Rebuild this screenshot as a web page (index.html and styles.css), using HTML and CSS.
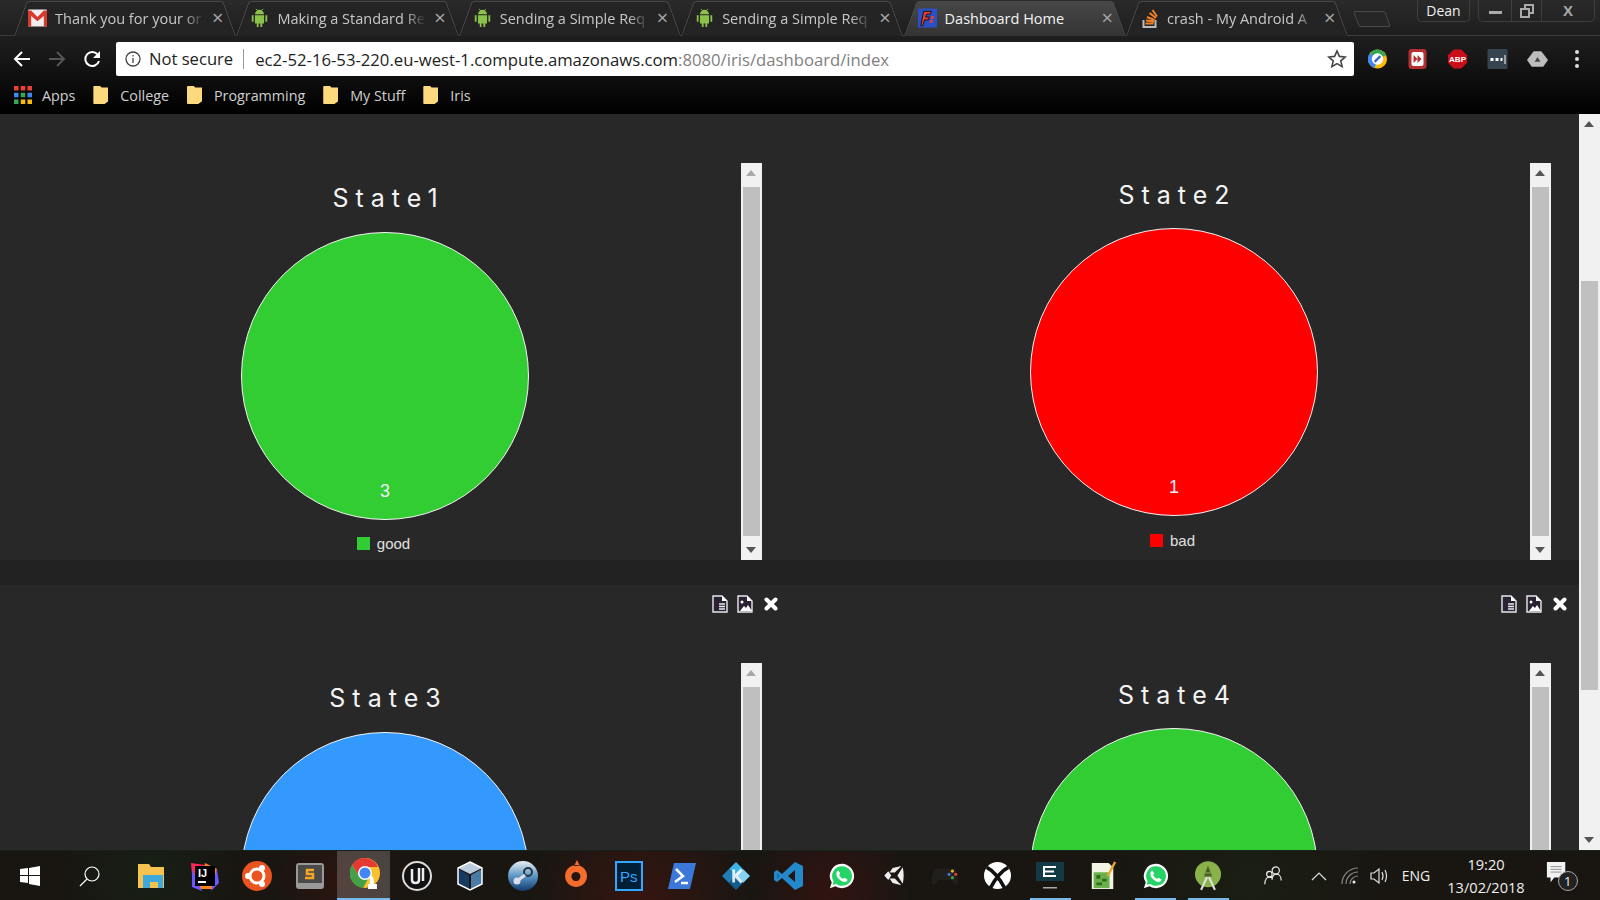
FILE: index.html
```html
<!DOCTYPE html>
<html lang="en">
<head>
    <meta charset="UTF-8">
    <title>Dashboard Home</title>
    <link rel="stylesheet" href="styles.css">
</head>
<body>
    <svg class="defs" width="0" height="0">
        <symbol id="android" viewBox="0 0 20 22">
            <path fill="#8bc34a" d="M5 7a5 5 0 0 1 10 0zM5 8h10v9h-2v4h-2v-4H9v4H7v-4H5zM1.500 8h2v7h-2zM16.500 8h2v7h-2z"/>
            <path stroke="#8bc34a" d="M6 1l2 2M14 1l-2 2"/>
        </symbol>
        <symbol id="doc" viewBox="0 0 16 18">
            <path fill="#2a2233" stroke="#e8e8f0" stroke-width="1.400" d="M1 1h9l5 5v11H1z"/>
            <path fill="#fff" d="M10 1l5 5h-5z"/>
            <path stroke="#e8e8f0" stroke-width="1.500" d="M7 9h6M7 11.500h6M7 14h6"/>
        </symbol>
        <symbol id="docimg" viewBox="0 0 16 18">
            <path fill="#2a2233" stroke="#e8e8f0" stroke-width="1.400" d="M1 1h9l5 5v11H1z"/>
            <path fill="#fff" d="M10 1l5 5h-5zM3 16l4-5 2 2 2-3 4 6z"/>
            <circle cx="5" cy="7" r="1.500" fill="#fff"/>
        </symbol>
        <symbol id="cross" viewBox="0 0 14 14">
            <path stroke="#fff" stroke-width="4" stroke-linecap="round" d="M2.500 2.500l9 9M11.500 2.500l-9 9"/>
        </symbol>
        <symbol id="whatsapp" viewBox="0 0 30 30">
            <path fill="#fff" d="M15 2a13 13 0 0 0-11 20l-2 6 6-2A13 13 0 1 0 15 2z"/>
            <path fill="#25d366" d="M15 4.500a10.500 10.500 0 0 0-9 16l-1 4 4-1a10.500 10.500 0 1 0 6-19z"/>
            <path fill="#fff" d="M11 9l2 3-1 2c1 2 2 3 4 4l2-1 3 2c-1 3-4 3-7 1-3-2-5-4-5-7 0-2 1-4 2-4z"/>
        </symbol>
    </svg>

    <header class="chrome">
        <div class="tabstrip">
            <div class="tab">
                <svg class="favicon" viewBox="0 0 18 16"><rect width="18" height="16" rx="1" fill="#eee"/><path fill="#d9392e" d="M0 1h3l6 6 6-6h3v15h-3V6l-6 5-6-5v10H0z"/></svg>
                <span class="tab-title">Thank you for your or</span>
                <span class="tab-x">×</span>
            </div>
            <div class="tab">
                <svg class="favicon"><use href="#android"/></svg>
                <span class="tab-title">Making a Standard Re</span>
                <span class="tab-x">×</span>
            </div>
            <div class="tab">
                <svg class="favicon"><use href="#android"/></svg>
                <span class="tab-title">Sending a Simple Req</span>
                <span class="tab-x">×</span>
            </div>
            <div class="tab">
                <svg class="favicon"><use href="#android"/></svg>
                <span class="tab-title">Sending a Simple Req</span>
                <span class="tab-x">×</span>
            </div>
            <div class="tab active">
                <svg class="favicon" viewBox="0 0 20 20"><rect width="20" height="20" fill="#2a50c8"/><path fill="#e8402a" stroke="#111" d="M6 3h8l-1 3H9L8 9h4l-1 3H7l-2 6H3z"/><path fill="#e8402a" d="M14 8h3l-1 3h-3zM13 12h3l-1 3h-3z"/></svg>
                <span class="tab-title full">Dashboard Home</span>
                <span class="tab-x">×</span>
            </div>
            <div class="tab">
                <svg class="favicon" viewBox="0 0 18 20"><path fill="#bcbbbb" d="M2 12h2v6h10v-6h2v8H2z"/><path stroke="#f48024" stroke-width="2" d="M5 15.500h8M5.500 12.500l8 1M6.500 9l7.500 3M9 5l6.500 5M12 2l4.500 6.500"/></svg>
                <span class="tab-title">crash - My Android A</span>
                <span class="tab-x">×</span>
            </div>
            <div class="newtab"></div>
            <div class="wincontrols">
                <div class="profile">Dean</div>
                <div class="winbtns">
                    <span class="winbtn min"><svg width="13" height="3"><rect width="13" height="3" fill="#aaa"/></svg></span>
                    <span class="winbtn rest"><svg width="14" height="14" fill="none" stroke="#aaa" stroke-width="2"><rect x="1" y="5" width="8" height="8"/><path d="M5 5V1h8v8H9"/></svg></span>
                    <span class="winbtn close">X</span>
                </div>
            </div>
        </div>

        <div class="toolbar">
            <svg class="nav" viewBox="0 0 18 18" fill="none" stroke="#fff" stroke-width="2"><path d="M17 9H2M9 2L2 9l7 7"/></svg>
            <svg class="nav" viewBox="0 0 18 18" fill="none" stroke="#555" stroke-width="2"><path d="M1 9h15M9 2l7 7-7 7"/></svg>
            <svg class="nav" viewBox="0 0 18 18" fill="none" stroke="#fff" stroke-width="2"><path d="M15 5a7 7 0 1 0 1 6"/><path fill="#fff" stroke="none" d="M17 1v7h-7z"/></svg>
            <div class="omnibox">
                <svg class="info" viewBox="0 0 16 16" fill="none" stroke="#444" stroke-width="1.300"><circle cx="8" cy="8" r="7"/><path d="M8 7v5M8 4v1.600"/></svg>
                <span class="secure">Not secure</span>
                <span class="url">ec2-52-16-53-220.eu-west-1.compute.amazonaws.com<span class="url-rest">:8080/iris/dashboard/index</span></span>
                <svg class="star" viewBox="0 0 20 20" fill="none" stroke="#444" stroke-width="1.600"><path d="M10 2l2.400 5.400 5.800.6-4.400 3.900 1.300 5.700L10 14.600l-5.100 3 1.300-5.700L1.800 8l5.800-.6z"/></svg>
            </div>
            <div class="extensions">
                <svg class="ext" viewBox="0 0 22 22"><circle cx="11" cy="11" r="10" fill="#fbbc05"/><path fill="#34a853" d="M3 5a10 10 0 0 1 17 2l-9 4z"/><path fill="#4285f4" d="M3 5a10 10 0 0 0 5 15.500L11 11z"/><circle cx="11" cy="11" r="6" fill="#fff"/><path stroke="#3367c4" stroke-width="2.400" d="M8 14l6-6"/></svg>
                <svg class="ext" viewBox="0 0 20 22"><rect x="1" y="1" width="18" height="20" rx="3" fill="#b52e31"/><rect x="4" y="4" width="12" height="14" rx="2" fill="#fff"/><path fill="#b52e31" d="M6 7l4 4-4 4zM10 7l4 4-4 4z"/></svg>
                <svg class="ext" viewBox="0 0 22 22"><path fill="#c9101a" d="M7 1h8l6 6v8l-6 6H7l-6-6V7z"/><text x="11" y="14" class="abp">ABP</text></svg>
                <svg class="ext" viewBox="0 0 20 22"><rect y="1" width="20" height="20" rx="1" fill="#36444f"/><path fill="#fff" d="M3 10h3v3H3zM8 10h3v3H8zM13 10h2v3h-2zM17 7h1v9h-1z"/></svg>
                <svg class="ext" viewBox="0 0 22 20"><path fill="#bdbdbd" d="M7 2h8l7 9-5 7H5l-5-7z"/><path fill="#444" d="M11 8l3 5H8z"/></svg>
            </div>
            <div class="kebab"><i></i><i></i><i></i></div>
        </div>

        <div class="bookmarks">
            <div class="bookmark">
                <svg class="apps" viewBox="0 0 16 16"><path fill="#ea4335" d="M0 0h4v4H0zM6 0h4v4H6zM12 0h4v4h-4z"/><path fill="#4285f4" d="M0 6h4v4H0zM12 6h4v4h-4z"/><path fill="#34a853" d="M6 6h4v4H6zM0 12h4v4H0z"/><path fill="#fbbc05" d="M6 12h4v4H6zM12 12h4v4h-4z"/></svg>
                Apps
            </div>
            <div class="bookmark"><span class="folder"></span>College</div>
            <div class="bookmark"><span class="folder"></span>Programming</div>
            <div class="bookmark"><span class="folder"></span>My Stuff</div>
            <div class="bookmark"><span class="folder"></span>Iris</div>
        </div>
    </header>

    <main class="page">
        <div class="dashboard">
            <div class="row first">
                <section class="panel">
                    <h2 class="chart-title">State1</h2>
                    <div class="pie good"><span class="pie-value">3</span></div>
                    <div class="legend"><span class="swatch good"></span>good</div>
                    <div class="vscroll idle"></div>
                </section>
                <section class="panel raised">
                    <h2 class="chart-title">State2</h2>
                    <div class="pie bad"><span class="pie-value">1</span></div>
                    <div class="legend"><span class="swatch bad"></span>bad</div>
                    <div class="vscroll"></div>
                </section>
            </div>
            <div class="band"></div>
            <div class="row-tools">
                <div class="tools">
                    <svg class="tool"><use href="#doc"/></svg>
                    <svg class="tool"><use href="#docimg"/></svg>
                    <svg class="tool cross"><use href="#cross"/></svg>
                </div>
                <div class="tools">
                    <svg class="tool"><use href="#doc"/></svg>
                    <svg class="tool"><use href="#docimg"/></svg>
                    <svg class="tool cross"><use href="#cross"/></svg>
                </div>
            </div>
            <div class="row">
                <section class="panel">
                    <h2 class="chart-title">State3</h2>
                    <div class="pie info-blue"></div>
                    <div class="vscroll idle"></div>
                </section>
                <section class="panel raised">
                    <h2 class="chart-title">State4</h2>
                    <div class="pie good"></div>
                    <div class="vscroll"></div>
                </section>
            </div>
        </div>
        <aside class="page-scroll">
            <span class="arrow up"></span>
            <div class="page-thumb"></div>
            <span class="arrow down"></span>
        </aside>
    </main>

    <footer class="taskbar">
        <div class="task start"><svg width="20" height="20" viewBox="0 0 20 20"><path fill="#fff" d="M0 3l8-1v7H0zM9 2l11-2v9H9zM0 10h8v7l-8-1zM9 10h11v10L9 18z"/></svg></div>
        <div class="task search"><svg width="22" height="22" viewBox="0 0 22 22" fill="none" stroke="#fff" stroke-width="1.200"><circle cx="13" cy="9" r="7"/><path d="M8 14l-7 7"/></svg></div>
        <div class="task"><svg width="28" height="27" viewBox="0 0 28 27"><path fill="#f5c44e" d="M1 2h11l2 3h13v21H1z"/><path fill="#3fa9dd" d="M6 13h20v13h-5v-6H13v6H6z"/></svg></div>
        <div class="task"><svg width="30" height="30" viewBox="0 0 30 30"><path fill="#fe2857" d="M2 2l14 2-6 24-6-3z"/><path fill="#fc801d" d="M16 2l12 6-4 20-14 0z"/><path fill="#6b57ff" d="M3 8l10 22-10-4zM28 8l2 14-8 8z"/><rect x="6" y="5" width="20" height="20" fill="#000"/><text x="9" y="16" class="ij">IJ</text><rect x="9" y="20" width="8" height="2" fill="#fff"/></svg></div>
        <div class="task"><svg width="30" height="30" viewBox="0 0 30 30"><circle cx="15" cy="15" r="15" fill="#e95420"/><circle cx="15" cy="15" r="7" fill="none" stroke="#fff" stroke-width="3"/><circle cx="6" cy="15" r="3" fill="#fff"/><circle cx="20" cy="7" r="3" fill="#fff"/><circle cx="20" cy="23" r="3" fill="#fff"/></svg></div>
        <div class="task"><svg width="28" height="28" viewBox="0 0 28 28"><rect y="1" width="28" height="26" rx="3" fill="#999"/><rect x="2" y="3" width="24" height="18" fill="#4a4a4a"/><path stroke="#f5a623" stroke-width="2.500" fill="none" d="M18 8h-7v4h6v4H9"/></svg></div>
        <div class="task current"><svg class="chrome-icon" width="32" height="32" viewBox="0 0 32 32"><circle cx="15" cy="15" r="15" fill="#fbc02d"/><path fill="#e53935" d="M15 0a15 15 0 0 0-13 7l7 11 6-9h13A15 15 0 0 0 15 0z"/><path fill="#43a047" d="M2 7a15 15 0 0 0 11 23l6-11-10-1z"/><circle cx="15" cy="15" r="7" fill="#fff"/><circle cx="15" cy="15" r="5.500" fill="#4285f4"/><path fill="#fff" d="M21 18c3 0 3 5 3 8h3v5h-9v-5h2c0-3-1-5 1-8z"/></svg></div>
        <div class="task"><svg width="30" height="30" viewBox="0 0 30 30"><circle cx="15" cy="15" r="14" fill="#111" stroke="#ddd" stroke-width="2"/><path fill="none" stroke="#eee" stroke-width="2.500" d="M10 8v11c0 4 7 4 7 0V7M21 7v13"/></svg></div>
        <div class="task"><svg width="26" height="30" viewBox="0 0 26 30"><path fill="#bcd" d="M13 1l12 6-12 6L1 7z"/><path fill="#183a61" d="M1 8l11 6v15L1 23z"/><path fill="#4a7ba7" d="M25 8l-11 6v15l11-6z"/><path fill="none" stroke="#fff" stroke-width="1.500" d="M13 1l12 6v16l-12 6-12-6V7z"/></svg></div>
        <div class="task"><svg width="30" height="30" viewBox="0 0 30 30"><defs><linearGradient id="steam" x1="0" y1="0" x2="0" y2="1"><stop offset="0" stop-color="#e8eef4"/><stop offset=".5" stop-color="#5c97c4"/><stop offset="1" stop-color="#123c72"/></linearGradient></defs><circle cx="15" cy="15" r="15" fill="url(#steam)"/><circle cx="20" cy="11" r="4" fill="none" stroke="#234" stroke-width="2"/><circle cx="9" cy="20" r="3.500" fill="#dde"/><path stroke="#dde" stroke-width="3" d="M9 20l8-6"/></svg></div>
        <div class="task"><svg width="24" height="32" viewBox="0 0 24 32"><path fill="#f56c2d" d="M12 5a11 11 0 1 0 .1 0zM12 12a4.500 4.500 0 1 1-.1 0zM13 0l3 6-6 0z"/></svg></div>
        <div class="task"><svg width="28" height="30" viewBox="0 0 28 30"><rect x="1" y="1" width="26" height="28" fill="#001e36" stroke="#31a8ff" stroke-width="2"/><text x="5" y="21" class="ps">Ps</text></svg></div>
        <div class="task"><svg width="28" height="26" viewBox="0 0 28 26"><path fill="#3b78d8" d="M6 0h22l-6 26H0z"/><path fill="none" stroke="#fff" stroke-width="2.500" d="M8 6l7 7-8 6"/><path stroke="#fff" stroke-width="2.500" d="M13 20h7"/></svg></div>
        <div class="task"><svg width="28" height="28" viewBox="0 0 30 30"><path fill="#3ab4e8" d="M15 0l7.500 7.500L15 15 7.500 7.500z"/><path fill="#1f7fb5" d="M0 15l7.500-7.500L15 15l-7.500 7.500z"/><path fill="#86d3f4" d="M15 15l7.500-7.500L30 15l-7.500 7.500z"/><path fill="#115e8c" d="M15 15l7.500 7.500L15 30l-7.500-7.500z"/><path fill="#fff" d="M11 8h3v5l6-6 2 2-5 6 5 6-2 2-6-6v5h-3z" opacity=".85"/></svg></div>
        <div class="task"><svg width="30" height="30" viewBox="0 0 30 30"><path fill="#2489ca" d="M21 1l8 4v20l-8 4L8 17l-5 4-3-2V11l3-2 5 4zM21 9l-7 6 7 6z"/><path fill="#1a6aa3" d="M3 12v6l3-3z"/></svg></div>
        <div class="task"><svg width="28" height="28"><use href="#whatsapp"/></svg></div>
        <div class="task unity"><svg width="21" height="21" viewBox="0 0 24 24"><path fill="#eee" d="M21 1L11 3.500 7.500 8.500h6l3.500-3.500zM22.500 2.500L19 8l-2.500 4 2.500 4 3.500 5.500c1.500-6 1.500-13 0-19zM21 23l-10-2.500-3.500-5h6l3.500 3.500zM1.500 12L6 7l3.500 5L6 17z"/></svg></div>
        <div class="task tight"><svg width="28" height="20" viewBox="0 0 34 24"><path fill="#201f1c" d="M6 3h22c3 0 5 10 5 16 0 5-5 4-8-2H9c-3 6-8 7-8 2C1 13 3 3 6 3z"/><circle cx="26" cy="6" r="2" fill="#e8b023"/><circle cx="30" cy="10" r="2" fill="#e53935"/><circle cx="22" cy="10" r="2" fill="#3b78d8"/><circle cx="26" cy="14" r="2" fill="#43a047"/></svg></div>
        <div class="task tight"><svg width="27" height="27" viewBox="0 0 30 30"><circle cx="15" cy="15" r="15" fill="#fff"/><path fill="none" stroke="#111" stroke-width="4" d="M3 6c6 3 13 10 20 23M27 6C21 9 14 16 7 29"/></svg></div>
        <div class="task tight running"><svg width="28" height="30" viewBox="0 0 28 30"><rect x="0" y="1" width="28" height="19" fill="#123a45"/><path fill="none" stroke="#fff" stroke-width="2" d="M20 6H8v9h12M8 10.500h10"/><rect x="7" y="26" width="14" height="1.500" fill="#aaa"/></svg></div>
        <div class="task tight"><svg width="28" height="30" viewBox="0 0 30 32"><path fill="#f4f4e4" d="M3 2h18l5 5v23H3z"/><path fill="#6ab04c" d="M5 12h17v17H5z"/><path fill="#2f6b1c" d="M8 15h4v4H8zM14 19h5v3h-5zM8 23h6v3H8z"/><path stroke="#e8a928" stroke-width="2.500" d="M28 1L20 16"/></svg></div>
        <div class="task tight running"><svg width="28" height="28"><use href="#whatsapp"/></svg></div>
        <div class="task tight running"><svg width="26" height="30" viewBox="0 0 30 34"><circle cx="15" cy="15" r="15" fill="#89b34a"/><path fill="#4a5f2c" d="M15 5l3 8h-6zM11 14h8v4h-8z"/><path stroke="#e0e0e0" stroke-width="2.500" d="M14 18L7 33M16 18l7 15"/></svg></div>
        <div class="tray">
            <svg class="people" width="20" height="20" viewBox="0 0 22 22" fill="none" stroke="#eee" stroke-width="1.300"><circle cx="14" cy="5" r="4"/><circle cx="7" cy="9" r="3"/><path d="M2 20c0-6 3-8 5-8l3 1M10 15c0-4 2-6 5-6s5 3 5 7"/></svg>
            <svg class="chevron" width="16" height="10" viewBox="0 0 16 10" fill="none" stroke="#ddd" stroke-width="1.200"><path d="M1 9l7-7 7 7"/></svg>
            <svg class="wifi" width="18" height="18" viewBox="0 0 18 18" fill="none" stroke="#888" stroke-width="1.200"><path d="M1 17a16 16 0 0 1 16-16M5 17a12 12 0 0 1 12-12M9 17a8 8 0 0 1 8-8"/><circle cx="13" cy="15" r="1.500" fill="#eee" stroke="none"/></svg>
            <svg class="volume" width="20" height="18" viewBox="0 0 20 18" fill="none" stroke="#ddd" stroke-width="1.200"><path d="M1 6h3l5-4v14l-5-4H1zM12 5q2 4 0 8M15 3q3 6 0 12"/></svg>
            <span class="lang">ENG</span>
            <div class="clock"><span>19:20</span><span>13/02/2018</span></div>
            <div class="notif">
                <svg width="22" height="24" viewBox="0 0 24 26"><path fill="#f2f2f2" d="M1 1h20v17H9l-4 5v-5H1z"/><path stroke="#888" d="M5 6h12M5 9h12M5 12h12"/></svg>
                <span class="notif-count">1</span>
            </div>
        </div>
    </footer>
</body>
</html>
```

FILE: styles.css
```css
* {
    box-sizing: border-box;
}

body {
    margin: 0;
    width: 1600px;
    height: 900px;
    overflow: hidden;
    display: flex;
    flex-direction: column;
    background: #282828;
    font-family: "Open Sans", "Noto Sans", sans-serif;
}

.defs {
    position: absolute;
}

/* Browser frame */
.chrome {
    height: 114px;
    flex: none;
    background: linear-gradient(#2a2a2a, #1e1e1e 36px, #1d1d1d 42px, #000 114px);
    color: #e6e6e6;
}

.tabstrip {
    height: 36px;
    display: flex;
    padding-left: 14px;
    border-bottom: 1px solid #3c3c3c;
}

.tab {
    position: relative;
    width: 222.400px;
    height: 36px;
    display: flex;
    align-items: center;
    gap: 8px;
    padding: 0 13px 0 14px;
    font-size: 14.500px;
    color: #c8c8c8;
    z-index: 1;
}

.tab::before,
.tab::after {
    content: "";
    position: absolute;
    top: 1px;
    bottom: 0;
    width: 50%;
    z-index: -1;
    background: #242424;
    border-top: 1px solid #474747;
    transform-origin: bottom;
}

.tab::before {
    left: 0;
    border-left: 1px solid #555;
    border-radius: 3px 0 0 0;
    transform: skewX(-20deg);
}

.tab::after {
    right: 0;
    border-right: 1px solid #555;
    border-radius: 0 3px 0 0;
    transform: skewX(20deg);
}

.tab.active {
    color: #f4f4f4;
    z-index: 2;
}

.tab.active::before,
.tab.active::after {
    background: linear-gradient(#474747, #343434);
}

.favicon {
    width: 19px;
    height: 20px;
    flex: none;
}

.tab-title {
    flex: 1;
    min-width: 0;
    white-space: nowrap;
    mask-image: linear-gradient(to left, transparent, #000 20px);
}

.tab-title.full {
    mask-image: none;
}

.tab-x {
    font-size: 20px;
    line-height: 1;
    color: #a8a8a8;
}

.newtab {
    width: 32px;
    height: 16px;
    margin: 11px 0 0 8px;
    border: 1px solid #4a4a4a;
    border-radius: 2px;
    transform: skewX(20deg);
    background: #262626;
}

.wincontrols {
    margin-left: auto;
    display: flex;
    align-items: flex-start;
    gap: 8px;
    padding-right: 5px;
}

.profile {
    width: 53px;
    height: 22px;
    border: 1px solid #3e3e3e;
    border-top: none;
    border-radius: 0 0 5px 5px;
    text-align: center;
    font-size: 14px;
    line-height: 21px;
    color: #f0f0f0;
}

.winbtns {
    display: flex;
    height: 22px;
    border: 1px solid #3e3e3e;
    border-top: none;
    border-radius: 0 0 5px 5px;
}

.winbtn {
    display: flex;
    align-items: center;
    justify-content: center;
    color: #aaa;
}

.min {
    width: 32px;
    padding-top: 4px;
}

.rest {
    width: 31px;
    border-left: 1px solid #3e3e3e;
    border-right: 1px solid #3e3e3e;
}

.close {
    width: 52px;
    font-family: "Liberation Sans", sans-serif;
    font-weight: bold;
    font-size: 15px;
}

.toolbar {
    height: 40px;
    display: flex;
    align-items: center;
    padding-top: 6px;
    padding-left: 13px;
}

.nav {
    width: 18px;
    height: 18px;
    flex: none;
    margin-right: 17px;
}

.omnibox {
    width: 1238px;
    height: 34px;
    margin-left: -2px;
    flex: none;
    display: flex;
    align-items: center;
    background: #fff;
    border-radius: 2px;
    color: #222;
    font-size: 16.600px;
}

.info {
    width: 16px;
    height: 16px;
    margin: 0 8px 0 9px;
}

.secure {
    padding-right: 10px;
    border-right: 1px solid #999;
    line-height: 20px;
    margin-right: 10px;
}

.url {
    font-size: 16.700px;
    margin-left: 1px;
}

.url-rest {
    color: #808080;
}

.star {
    width: 20px;
    height: 20px;
    margin-left: auto;
    margin-right: 7px;
}

.extensions {
    display: flex;
    align-items: center;
    gap: 19px;
    margin-left: 13px;
}

.ext {
    width: 21px;
    height: 22px;
}

.abp {
    font-family: "Liberation Sans", sans-serif;
    font-size: 8.500px;
    font-weight: bold;
    fill: #fff;
    text-anchor: middle;
}

.kebab {
    display: flex;
    flex-direction: column;
    gap: 3px;
    margin-left: 27px;
}

.kebab i {
    width: 4px;
    height: 4px;
    background: #ddd;
    border-radius: 50%;
}

.bookmarks {
    height: 38px;
    display: flex;
    align-items: center;
    padding-left: 14px;
    font-size: 14.300px;
    color: #cfcfcf;
}

.bookmark {
    display: flex;
    align-items: center;
    gap: 12px;
    margin-right: 18px;
}

.bookmark:first-child {
    gap: 10px;
}

.apps {
    width: 18px;
    height: 18px;
}

.folder {
    width: 15px;
    height: 18px;
    background: #fbd97c;
    border-radius: 1px;
    clip-path: polygon(0 0, 45% 0, 55% 8%, 100% 8%, 100% 85%, 75% 100%, 0 100%);
}

/* Page */
.page {
    flex: 1;
    min-height: 0;
    display: flex;
    overflow: hidden;
}

.dashboard {
    flex: 1;
    min-width: 0;
}

.row {
    display: grid;
    grid-template-columns: 789px 790px;
    height: 397px;
}

.row.first {
    margin-top: 49px;
}

.panel {
    position: relative;
    width: 754px;
    margin-left: 8px;
    display: flex;
    flex-direction: column;
    align-items: center;
    color: #fff;
}

.chart-title {
    height: 69px;
    margin: 0;
    padding: 17px 0 0 7px;
    font-family: Inter, sans-serif;
    font-weight: 400;
    font-size: 25px;
    line-height: 36px;
    letter-spacing: 7px;
    color: #f4f4f4;
}

.raised .chart-title {
    height: 65px;
    padding-top: 14px;
}

.pie {
    position: relative;
    flex: none;
    width: 288px;
    height: 288px;
    border-radius: 50%;
    border: 1.500px solid #f4f4f4;
}

.pie.good {
    background: #32cd32;
}

.pie.bad {
    background: #ff0000;
}

.pie.info-blue {
    background: #3399ff;
}

.pie-value {
    position: absolute;
    left: 0;
    right: 0;
    bottom: 17px;
    text-align: center;
    font-family: "Liberation Sans", sans-serif;
    font-size: 18px;
    color: #eef;
}

.legend {
    display: flex;
    align-items: center;
    gap: 7px;
    margin-top: 15px;
    padding-right: 3px;
    font-family: "Liberation Sans", sans-serif;
    font-size: 15px;
    color: #e0e0e0;
}

.raised .legend {
    margin-top: 16px;
}

.swatch {
    width: 13px;
    height: 13px;
}

.swatch.good {
    background: #32cd32;
}

.swatch.bad {
    background: #ff0000;
}

.vscroll {
    position: absolute;
    top: 0;
    right: 0;
    bottom: 0;
    width: 21px;
    background:
        linear-gradient(#bfbfbf, #bfbfbf) 2px 24px / 17px calc(100% - 48px) no-repeat,
        #f1f1f1;
}

.vscroll::before,
.vscroll::after {
    content: "";
    position: absolute;
    left: 5px;
    border-left: 5.500px solid transparent;
    border-right: 5.500px solid transparent;
}

.vscroll::before {
    top: 7px;
    border-bottom: 6px solid #555;
}

.vscroll.idle::before {
    border-bottom-color: #a8a8a8;
}

.vscroll::after {
    bottom: 7px;
    border-top: 6px solid #555;
}

.band {
    height: 25px;
    background: #222;
}

.row-tools {
    height: 78px;
    display: grid;
    grid-template-columns: 789px 789px;
}

.tools {
    display: flex;
    justify-content: flex-end;
    align-items: flex-start;
    gap: 9px;
    padding: 10px 11px 0 0;
}

.tool {
    width: 16px;
    height: 18px;
}

.tool.cross {
    width: 14px;
    height: 14px;
    margin: 2px 0 0 2px;
}

.page-scroll {
    position: relative;
    flex: none;
    width: 21px;
    background: #f1f1f1;
}

.page-thumb {
    position: absolute;
    left: 2px;
    top: 167px;
    width: 17px;
    height: 409px;
    background: #c0c0c0;
}

.arrow {
    position: absolute;
    left: 5px;
    border-left: 5.500px solid transparent;
    border-right: 5.500px solid transparent;
}

.arrow.up {
    top: 7px;
    border-bottom: 6px solid #555;
}

.arrow.down {
    bottom: 7px;
    border-top: 6px solid #555;
}

/* Windows taskbar */
.taskbar {
    height: 50px;
    flex: none;
    display: flex;
    align-items: center;
    background:
        radial-gradient(circle at 640px 50px, rgba(90, 20, 15, .45), transparent 110px),
        radial-gradient(circle at 830px 40px, rgba(85, 15, 15, .4), transparent 80px),
        radial-gradient(circle at 340px 30px, rgba(70, 18, 12, .4), transparent 70px),
        radial-gradient(circle at 150px 20px, rgba(20, 50, 25, .35), transparent 90px),
        radial-gradient(circle at 1250px 30px, rgba(30, 50, 20, .3), transparent 140px),
        #191612;
    border-top: 1px solid #14241c;
    color: #eee;
}

.task {
    position: relative;
    width: 53.200px;
    height: 50px;
    flex: none;
    display: flex;
    align-items: center;
    justify-content: center;
}

.task.start {
    width: 60px;
}

.task.search {
    width: 64px;
    padding-right: 4px;
}

.task.unity {
    width: 50px;
}

.task.tight {
    width: 52.700px;
}

.task.current {
    background: rgba(255, 255, 255, .2);
    border-bottom: 3px solid #76b9ed;
}

.chrome-icon {
    margin-left: 5px;
}

.task.running::after {
    content: "";
    position: absolute;
    left: 6px;
    right: 6px;
    bottom: 0;
    height: 3px;
    background: #76b9ed;
}

.tray {
    flex: 1;
    display: flex;
    align-items: center;
    padding-left: 28px;
}

.chevron {
    margin-left: 28px;
}

.wifi {
    margin-left: 14px;
}

.volume {
    margin-left: 11px;
}

.lang {
    margin-left: 12px;
    font-size: 14px;
}

.clock {
    display: flex;
    flex-direction: column;
    align-items: center;
    gap: 5px;
    margin-left: 17px;
    font-size: 14.600px;
    line-height: 18px;
}

.notif {
    position: relative;
    width: 22px;
    height: 30px;
    margin-left: 21px;
    margin-top: 1px;
}

.notif-count {
    position: absolute;
    left: 12px;
    top: 10px;
    width: 20px;
    height: 20px;
    border: 1px solid #aaa;
    border-radius: 50%;
    background: #222;
    text-align: center;
    font-size: 13px;
    line-height: 18px;
}

.ij,
.ps {
    font-family: "Liberation Sans", sans-serif;
    font-weight: bold;
    fill: #fff;
}

.ij {
    font-size: 11px;
}

.ps {
    font-size: 15px;
    font-weight: normal;
    fill: #31a8ff;
}
```
